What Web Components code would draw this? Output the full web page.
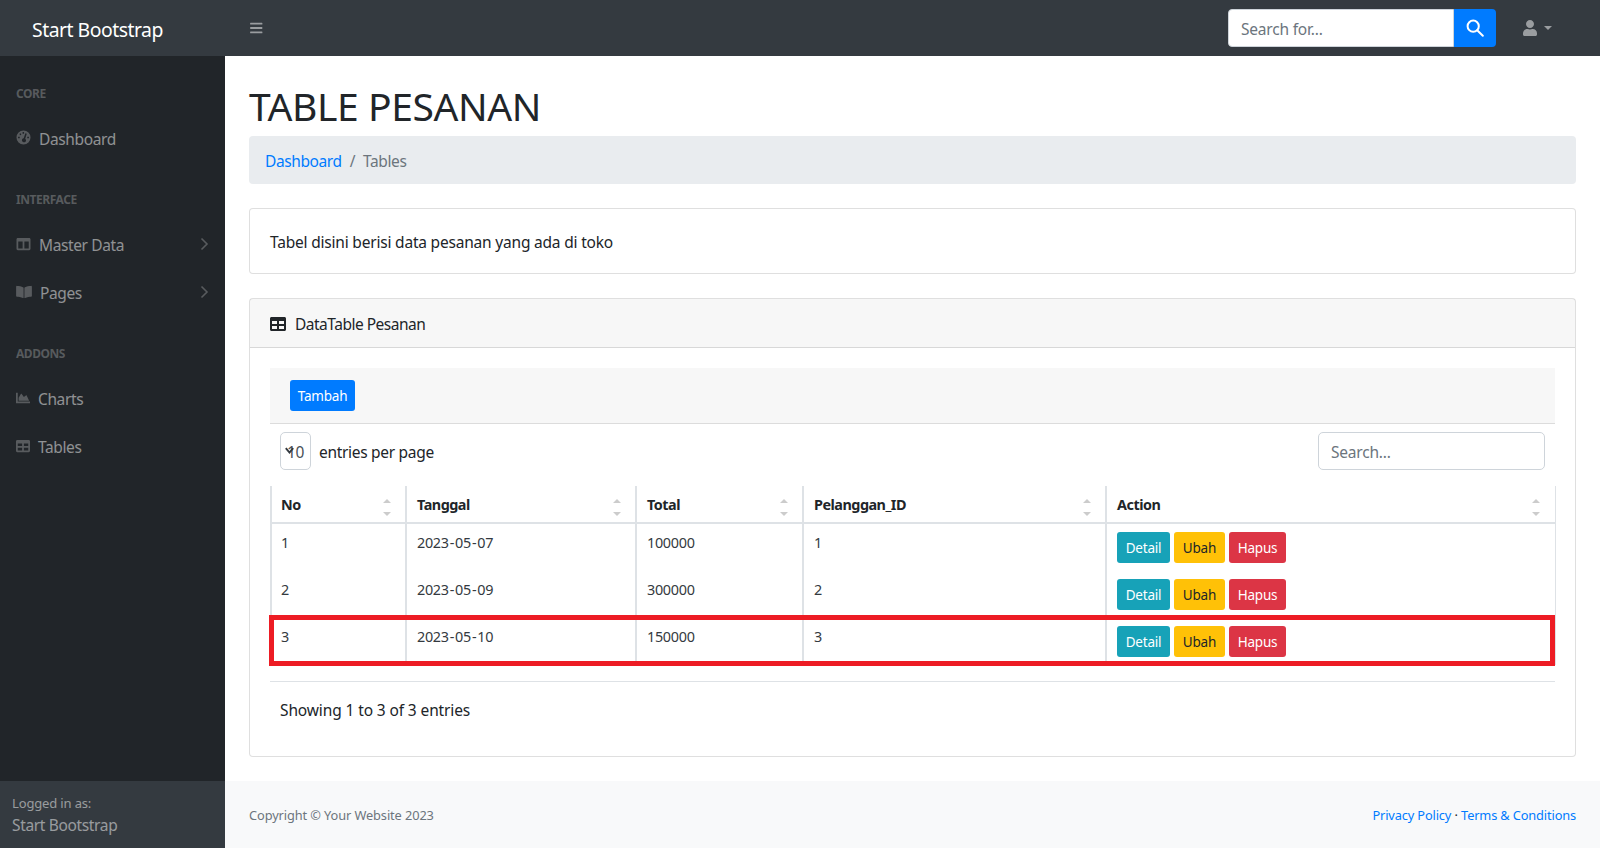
<!DOCTYPE html>
<html lang="en">
<head>
<meta charset="utf-8">
<title>Table Pesanan</title>
<style>
  html, body { margin: 0; height: 100%; }
  body { font-family: "Noto Sans", sans-serif; font-size: 15.5px; line-height: 24px; color: #212529; letter-spacing: -0.2px; overflow: hidden; }
</style>
</head>
<body>
<sb-layout>
  <sb-topnav slot="top"></sb-topnav>
  <sb-sidenav slot="side"></sb-sidenav>
  <page-title>TABLE PESANAN</page-title>
  <sb-breadcrumb></sb-breadcrumb>
  <sb-card>Tabel disini berisi data pesanan yang ada di toko</sb-card>
  <sb-card title="DataTable Pesanan">
    <order-table></order-table>
  </sb-card>
  <sb-footer slot="foot"></sb-footer>
</sb-layout>

<script>
const ICONS = {
  bars: ['0 0 448 512', 'M16 132h416c8.837 0 16-7.163 16-16V76c0-8.837-7.163-16-16-16H16C7.163 60 0 67.163 0 76v40c0 8.837 7.163 16 16 16zm0 160h416c8.837 0 16-7.163 16-16v-40c0-8.837-7.163-16-16-16H16c-8.837 0-16 7.163-16 16v40c0 8.837 7.163 16 16 16zm0 160h416c8.837 0 16-7.163 16-16v-40c0-8.837-7.163-16-16-16H16c-8.837 0-16 7.163-16 16v40c0 8.837 7.163 16 16 16z'],
  user: ['0 0 448 512', 'M224 256c70.7 0 128-57.3 128-128S294.7 0 224 0 96 57.3 96 128s57.3 128 128 128zm89.6 32h-16.7c-22.2 10.2-46.9 16-72.9 16s-50.6-5.8-72.9-16h-16.7C60.2 288 0 348.2 0 422.4V464c0 26.5 21.5 48 48 48h352c26.5 0 48-21.5 48-48v-41.6c0-74.2-60.2-134.4-134.4-134.4z'],
  table: ['0 0 512 512', 'M464 32H48C21.49 32 0 53.49 0 80v352c0 26.51 21.49 48 48 48h416c26.51 0 48-21.49 48-48V80c0-26.51-21.49-48-48-48zM224 416H64v-96h160v96zm0-160H64v-96h160v96zm224 160H288v-96h160v96zm0-160H288v-96h160v96z'],
  columns: ['0 0 512 512', 'M464 32H48C21.49 32 0 53.49 0 80v352c0 26.51 21.49 48 48 48h416c26.51 0 48-21.49 48-48V80c0-26.51-21.49-48-48-48zM224 416H64V160h160v256zm224 0H288V160h160v256z'],
  area: ['0 0 512 512', 'M500 384c6.6 0 12 5.4 12 12v40c0 6.6-5.4 12-12 12H12c-6.6 0-12-5.4-12-12V76c0-6.6 5.4-12 12-12h40c6.6 0 12 5.4 12 12v308h436zM372.7 159.5L288 216l-85.3-113.7c-5.1-6.8-15.5-6.3-19.9 1L96 248v104h384l-89.9-187.8c-3.2-6.5-11.4-8.7-17.4-4.7z'],
  book: ['0 0 576 512', 'M542.22 32.05c-54.8 3.11-163.72 14.43-230.96 55.59-4.64 2.84-7.27 7.89-7.27 13.17v363.87c0 11.55 12.63 18.85 23.28 13.49 69.18-34.82 169.23-44.32 218.7-46.92 16.89-.89 30.02-14.43 30.02-30.66V62.75c.01-17.71-15.35-31.74-33.77-30.7zM264.73 87.64C197.5 46.48 88.58 35.17 33.78 32.05 15.36 31.01 0 45.04 0 62.75V400.6c0 16.24 13.13 29.78 30.02 30.66 49.49 2.6 149.59 12.11 218.77 46.95 10.62 5.35 23.21-1.94 23.21-13.46V100.63c0-5.29-2.62-10.25-7.27-12.99z'],
  gauge: ['0 0 16 16', 'M8 .5a7.5 7.5 0 1 0 0 15 7.5 7.5 0 0 0 0-15zM7 2.2h1.6v1.8H7zM3.9 3.6l1.4 0 .3 1.6-1.6.3zM2.2 7.2h1.8v1.7H2.2zM12 7.2h1.8v1.7H12zM10 3.4l1.5.5-1.7 5.3a2.2 2.2 0 1 1-1.6-.4z']
};

function icon(name, w, h, color) {
  const [box, d] = ICONS[name];
  return `<svg xmlns="http://www.w3.org/2000/svg" viewBox="${box}" width="${w}" height="${h}" fill="${color}" fill-rule="evenodd" style="display:block;flex:none"><path d="${d}"/></svg>`;
}

class SbLayout extends HTMLElement {
  constructor() {
    super();
    this.attachShadow({ mode: 'open' });
    this.shadowRoot.innerHTML = `
      <style>
        :host { display: grid; grid-template-columns: 225px 1fr; grid-template-rows: 56px 1fr; height: 848px; }
        .top { grid-column: 1 / 3; }
        .side { display: flex; min-height: 0; }
        .main { display: flex; flex-direction: column; min-width: 0; background: #fff; }
        .content { flex: 1; padding: 24px 24px 0; }
      </style>
      <div class="top"><slot name="top"></slot></div>
      <div class="side"><slot name="side"></slot></div>
      <div class="main">
        <div class="content"><slot></slot></div>
        <slot name="foot"></slot>
      </div>
    `;
  }
}

class SbTopnav extends HTMLElement {
  constructor() {
    super();
    this.attachShadow({ mode: 'open' });
    this.shadowRoot.innerHTML = `
      <style>
        :host { display: flex; align-items: center; height: 56px; background: #343a40; }
        .brand { width: 225px; box-sizing: border-box; padding: 4px 0 0 32px; font-size: 19.4px; letter-spacing: -0.5px; color: #fff; flex: none; }
        .toggle { margin-left: 25px; margin-bottom: 1px; }
        .search { margin-left: auto; display: flex; height: 38px; }
        .input { width: 226px; box-sizing: border-box; background: #fff; border: 1px solid #ced4da; border-radius: 4px 0 0 4px; padding: 7px 12px 5px; color: #6c757d; }
        .go { width: 42px; background: #007bff; border-radius: 0 4px 4px 0; display: flex; align-items: center; justify-content: center; }
        .user { display: flex; align-items: center; margin: 0 48px 0 27px; gap: 7px; }
        .caret { width: 0; height: 0; border: 4px solid transparent; border-top-color: rgba(255,255,255,.5); border-bottom: 0; }
      </style>
      <div class="brand">Start Bootstrap</div>
      <div class="toggle">${icon('bars', 12.5, 14, 'rgba(255,255,255,.5)')}</div>
      <div class="search">
        <div class="input">Search for...</div>
        <div class="go"><svg width="18" height="18" viewBox="0 0 18 18" fill="none" stroke="#fff" stroke-width="2"><circle cx="7.2" cy="7.2" r="5.6"/><path d="m11.2 11.2 5.6 5.6" stroke-linecap="round"/></svg></div>
      </div>
      <div class="user">${icon('user', 14, 16, 'rgba(255,255,255,.5)')}<span class="caret"></span></div>
    `;
  }
}

class SbNavLink extends HTMLElement {
  constructor() {
    super();
    this.attachShadow({ mode: 'open' });
  }
  connectedCallback() {
    const name = this.getAttribute('icon');
    const w = { gauge: 15, columns: 15, book: 16, area: 14, table: 14 }[name];
    const more = this.hasAttribute('more');
    this.shadowRoot.innerHTML = `
      <style>
        :host { display: flex; align-items: center; height: 48px; box-sizing: border-box; padding: 2px 16px 0; color: rgba(255,255,255,.5); letter-spacing: -0.38px; }
        .ico { margin-right: 8px; margin-top: -3px; }
        .chev { margin-left: auto; margin-top: -3px; }
      </style>
      <span class="ico">${icon(name, w, name === 'gauge' ? 15 : 14, 'rgba(255,255,255,.25)')}</span>
      <slot></slot>
      ${more ? `<svg class="chev" width="9" height="14" viewBox="0 0 9 14" fill="none" stroke="rgba(255,255,255,.25)" stroke-width="1.6"><path d="M1.5 1.5 7 7l-5.5 5.5"/></svg>` : ''}
    `;
  }
}

class SbNavHeading extends HTMLElement {
  constructor() {
    super();
    this.attachShadow({ mode: 'open' });
    this.shadowRoot.innerHTML = `
      <style>
        :host { display: block; padding: 29px 16px 11px; font-size: 12px; line-height: 18px; letter-spacing: -0.45px; font-weight: 700; color: rgba(255,255,255,.25); text-transform: uppercase; }
      </style>
      <slot></slot>
    `;
  }
}

class SbSidenav extends HTMLElement {
  constructor() {
    super();
    this.attachShadow({ mode: 'open' });
    this.shadowRoot.innerHTML = `
      <style>
        :host { display: flex; flex-direction: column; flex: 1; background: #212529; }
        .menu { flex: 1; }
        .foot { height: 67px; box-sizing: border-box; padding: 12px; background: #343a40; color: rgba(255,255,255,.5); letter-spacing: -0.35px; line-height: 22px; }
        .foot small { display: block; font-size: 13px; line-height: 21px; letter-spacing: -0.15px; }
      </style>
      <div class="menu">
        <sb-nav-heading>Core</sb-nav-heading>
        <sb-nav-link icon="gauge">Dashboard</sb-nav-link>
        <sb-nav-heading>Interface</sb-nav-heading>
        <sb-nav-link icon="columns" more>Master Data</sb-nav-link>
        <sb-nav-link icon="book" more>Pages</sb-nav-link>
        <sb-nav-heading>Addons</sb-nav-heading>
        <sb-nav-link icon="area">Charts</sb-nav-link>
        <sb-nav-link icon="table">Tables</sb-nav-link>
      </div>
      <div class="foot"><small>Logged in as:</small>Start Bootstrap</div>
    `;
  }
}

class PageTitle extends HTMLElement {
  constructor() {
    super();
    this.attachShadow({ mode: 'open' });
    this.shadowRoot.innerHTML = `
      <style>
        :host { display: block; height: 56px; box-sizing: border-box; padding-top: 2px; font-size: 39px; line-height: 48px; font-weight: 400; letter-spacing: -0.4px; }
      </style>
      <slot></slot>
    `;
  }
}

class SbBreadcrumb extends HTMLElement {
  constructor() {
    super();
    this.attachShadow({ mode: 'open' });
    this.shadowRoot.innerHTML = `
      <style>
        :host { display: flex; height: 48px; box-sizing: border-box; padding: 13px 16px 11px; margin-bottom: 24px; background: #e9ecef; border-radius: 4px; letter-spacing: -0.4px; }
        a { color: #007bff; text-decoration: none; }
        i { font-style: normal; color: #6c757d; padding: 0 8px; }
        span { color: #6c757d; }
      </style>
      <a href="#">Dashboard</a><i>/</i><span>Tables</span>
    `;
  }
}

class SbCard extends HTMLElement {
  constructor() {
    super();
    this.attachShadow({ mode: 'open' });
  }
  connectedCallback() {
    const title = this.getAttribute('title');
    this.removeAttribute('title');
    this.shadowRoot.innerHTML = `
      <style>
        :host { display: block; margin-bottom: 24px; background: #fff; border: 1px solid rgba(0,0,0,.125); border-radius: 4px; }
        .head { display: flex; align-items: center; gap: 9px; height: 49px; box-sizing: border-box; padding: 2px 20px 0; background: rgba(0,0,0,.03); border-bottom: 1px solid rgba(0,0,0,.125); }
        .head span { letter-spacing: -0.5px; }
        .body { padding: 20px; }
        .plain { padding: 21px 20px 19px; }
      </style>
      ${title ? `<div class="head">${icon('table', 16, 16, '#212529')}<span>${title}</span></div>` : ''}
      <div class="body ${title ? '' : 'plain'}"><slot></slot></div>
    `;
  }
}

class ActionButton extends HTMLElement {
  constructor() {
    super();
    this.attachShadow({ mode: 'open' });
    this.shadowRoot.innerHTML = `
      <style>
        :host { display: inline-flex; align-items: center; justify-content: center; vertical-align: top; height: 31px; box-sizing: border-box; font-size: 13.5px; letter-spacing: -0.2px; border-radius: 3px; background: var(--bg); color: var(--fg, #fff); }
      </style>
      <slot></slot>
    `;
  }
}

class OrderTable extends HTMLElement {
  constructor() {
    super();
    this.attachShadow({ mode: 'open' });
    const cols = [['No', 135], ['Tanggal', 230], ['Total', 167], ['Pelanggan_ID', 303], ['Action', 449]];
    const rows = [
      ['1', '2023-05-07', '100000', '1'],
      ['2', '2023-05-09', '300000', '2'],
      ['3', '2023-05-10', '150000', '3']
    ];
    const dash = v => v.replace(/-/g, '<span class="dash">-</span>');
    const head = cols.map(c => `<th>${c[0]}<i class="sort"></i></th>`).join('');
    const body = rows.map(r => `<tr>${r.map(v => `<td>${dash(v)}</td>`).join('')}<td class="acts">
      <action-button style="--bg:#17a2b8;width:53px">Detail</action-button>
      <action-button style="--bg:#ffc107;--fg:#212529;width:51px">Ubah</action-button>
      <action-button style="--bg:#dc3545;width:57px">Hapus</action-button>
    </td></tr>`).join('');
    this.shadowRoot.innerHTML = `
      <style>
        :host { display: block; position: relative; }
        .tools { height: 56px; padding: 12px 20px; box-sizing: border-box; background: #f7f7f7; border-bottom: 1px solid #dcdcdc; }
        .top { display: flex; justify-content: space-between; padding: 8px 10px 16px; }
        .per { display: flex; align-items: center; gap: 8px; padding-top: 2px; letter-spacing: -0.3px; }
        .per > span { margin-top: -1px; }
        .select { position: relative; width: 31px; height: 38px; margin-top: -2px; box-sizing: border-box; border: 1px solid #ced4da; border-radius: 5px; padding: 7px 0 5px 6px; color: #495057; overflow: hidden; }
        .select svg { position: absolute; left: 4px; top: 14px; }
        .find { width: 227px; height: 38px; box-sizing: border-box; border: 1px solid #ced4da; border-radius: 5px; padding: 7px 12px 5px; color: #6c757d; }
        table { width: 1284px; border-collapse: collapse; table-layout: fixed; font-size: 14.4px; line-height: 24px; letter-spacing: -0.3px; }
        th { position: relative; height: 37px; box-sizing: border-box; padding: 7px 10px 5px; text-align: left; font-weight: 700; letter-spacing: -0.5px; border-bottom: 2px solid #dee2e6; border-left: 2px solid #dee2e6; }
        th:last-child, td:last-child { border-right: 1px solid #dee2e6; }
        th:first-child, td:first-child { padding-left: 9px; }
        td { padding: 7px 10px 9px; vertical-align: top; border-left: 2px solid #dee2e6; height: 47px; box-sizing: border-box; color: #343a40; }
        td.acts { padding: 8px 10px; font-size: 0; }
        .acts action-button + action-button { margin-left: 4px; }
        .dash { margin: 0 1px; }
        .sort { position: absolute; right: 14px; top: 13px; width: 8px; height: 17px; }
        th:last-child .sort { right: 15px; }
        .sort::before, .sort::after { content: ""; position: absolute; left: 0; border: 4px solid transparent; opacity: .2; }
        .sort::before { top: 0; border-top: 0; border-bottom-color: #000; }
        .sort::after { bottom: 0; border-bottom: 0; border-top-color: #000; }
        .bottom { margin-top: 16px; padding: 16px 10px 0; border-top: 1px solid #dee2e6; height: 55px; box-sizing: border-box; letter-spacing: -0.12px; }
        .mark { position: absolute; left: -1px; width: 1286px; top: 247px; height: 51px; box-sizing: border-box; border: 5px solid #ed1c24; }
      </style>
      <div class="tools"><action-button style="--bg:#007bff;width:65px">Tambah</action-button></div>
      <div class="top">
        <div class="per">
          <div class="select">10<svg width="9" height="8" viewBox="0 0 9 8" fill="none" stroke="#343a40" stroke-width="1.9"><path d="M.8 1.2 4.5 5.6 8.2 1.2"/></svg></div>
          <span>entries per page</span>
        </div>
        <div class="find">Search...</div>
      </div>
      <table>
        <colgroup>${cols.map(c => `<col style="width:${c[1]}px">`).join('')}</colgroup>
        <thead><tr>${head}</tr></thead>
        <tbody>${body}</tbody>
      </table>
      <div class="bottom">Showing 1 to 3 of 3 entries</div>
      <div class="mark"></div>
    `;
  }
}

class SbFooter extends HTMLElement {
  constructor() {
    super();
    this.attachShadow({ mode: 'open' });
    this.shadowRoot.innerHTML = `
      <style>
        :host { display: flex; align-items: center; justify-content: space-between; height: 67px; box-sizing: border-box; padding: 0 24px; background: #f8f9fa; font-size: 12.8px; letter-spacing: -0.1px; color: #6c757d; }
        a { color: #007bff; text-decoration: none; letter-spacing: -0.14px; }
        i { font-style: normal; color: #212529; }
      </style>
      <span>Copyright © Your Website 2023</span>
      <span><a href="#">Privacy Policy</a> <i>·</i> <a href="#">Terms &amp; Conditions</a></span>
    `;
  }
}

customElements.define('sb-layout', SbLayout);
customElements.define('sb-topnav', SbTopnav);
customElements.define('sb-nav-link', SbNavLink);
customElements.define('sb-nav-heading', SbNavHeading);
customElements.define('sb-sidenav', SbSidenav);
customElements.define('page-title', PageTitle);
customElements.define('sb-breadcrumb', SbBreadcrumb);
customElements.define('sb-card', SbCard);
customElements.define('action-button', ActionButton);
customElements.define('order-table', OrderTable);
customElements.define('sb-footer', SbFooter);
</script>
</body>
</html>
